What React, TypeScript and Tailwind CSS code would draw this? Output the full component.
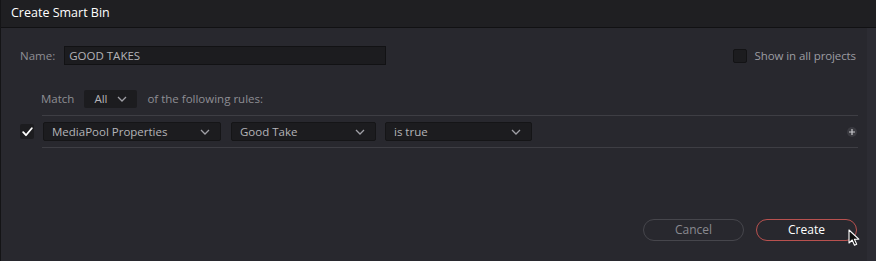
import React from "react";

const Chevron = () => (
  <svg width="10" height="6" viewBox="0 0 10 6" className="shrink-0">
    <path d="M1 1l4 4 4-4" fill="none" stroke="#a0a0a6" strokeWidth="1.3" />
  </svg>
);

const Select: React.FC<{ label: string; className: string }> = ({ label, className }) => (
  <div
    className={`flex items-center justify-between h-[19px] rounded-[2px] bg-[#1c1c1f] border border-[#151517] pl-[8px] pr-[10px] text-[#b4b4b8] ${className}`}
  >
    <span>{label}</span>
    <Chevron />
  </div>
);

export default function App() {
  return (
    <div
      className="w-[876px] h-[261px] flex flex-col bg-[#28282e] border-l border-[#141416] text-[11.5px] overflow-hidden"
      style={{ fontFamily: '"Open Sans", "Noto Sans", sans-serif' }}
    >
      <div className="h-[28px] shrink-0 flex items-center pl-[10px] bg-[#1f1f22] border-b border-[#111113] text-white text-[12.5px]">
        Create Smart Bin
      </div>

      <div className="flex flex-1">
        <div className="flex-1 flex flex-col pl-[19px] pr-[9px]">
          <div className="flex items-center justify-between mt-[18px] h-[19px]">
            <div className="flex items-center">
              <span className="text-[#8e8e94]">Name:</span>
              <div className="ml-[9px] w-[322px] h-[19px] flex items-center pl-[4px] bg-[#1c1c1f] border border-[#121214] text-[#b4b4b8]">
                GOOD TAKES
              </div>
            </div>
            <div className="flex items-center">
              <div className="w-[14px] h-[14px] rounded-[2px] bg-[#1c1c1f] border border-[#131315]" />
              <span className="ml-[8px] mr-[2px] text-[#9c9ca2] tracking-[-0.1px]">Show in all projects</span>
            </div>
          </div>

          <div className="flex items-center mt-[25px] pl-[21px] h-[18px]">
            <span className="text-[#8e8e94]">Match</span>
            <div className="ml-[10px] w-[53px] h-[18px] flex items-center justify-between px-[10px] rounded-[2px] bg-[#1c1c1f] text-[#b4b4b8]">
              <span>All</span>
              <Chevron />
            </div>
            <span className="ml-[10px] text-[#8e8e94]">of the following rules:</span>
          </div>

          <div className="ml-[22px] mt-[7px] h-[1px] bg-[#3e3e44]" />

          <div className="flex items-center h-[31px]">
            <div className="w-[14px] h-[15px] rounded-[2px] bg-[#1c1c1f] flex items-center justify-center">
              <svg width="11" height="10" viewBox="0 0 11 10">
                <path d="M1.2 5.2l2.8 3L9.8 1.2" fill="none" stroke="#ffffff" strokeWidth="1.8" strokeLinecap="round" strokeLinejoin="round" />
              </svg>
            </div>
            <Select label="MediaPool Properties" className="ml-[9px] w-[178px]" />
            <Select label="Good Take" className="ml-[10px] w-[145px]" />
            <Select label="is true" className="ml-[9px] w-[147px]" />
            <div className="flex-1" />
            <div className="w-[10px] h-[10px] rounded-full bg-[#3a3a40] flex items-center justify-center mr-[1px]">
              <svg width="8" height="8" viewBox="0 0 8 8">
                <path d="M4 1v6M1 4h6" stroke="#c8c8cc" strokeWidth="1.2" />
              </svg>
            </div>
          </div>

          <div className="ml-[22px] h-[1px] bg-[#3e3e44]" />

          <div className="flex-1" />

          <div className="flex justify-end items-center gap-[12px] mb-[20px] mr-[1px] relative">
            <div className="w-[101px] h-[22px] rounded-full border border-[#46464c] flex items-center justify-center text-[#8a8a90] text-[12px]">
              Cancel
            </div>
            <div className="w-[101px] h-[22px] rounded-full border border-[#b9514f] flex items-center justify-center text-white text-[12px]">
              Create
            </div>
            <svg width="13" height="18" viewBox="0 0 13 18" className="absolute right-[-4px] top-[10px]">
              <path d="M1 1v13l3.2-3 2.3 5.2 2.2-1-2.3-5h4.4z" fill="#111" stroke="#fff" strokeWidth="1.1" strokeLinejoin="round" />
            </svg>
          </div>
        </div>
        <div className="w-[9px] bg-[#2c2c33]" />
      </div>
    </div>
  );
}
